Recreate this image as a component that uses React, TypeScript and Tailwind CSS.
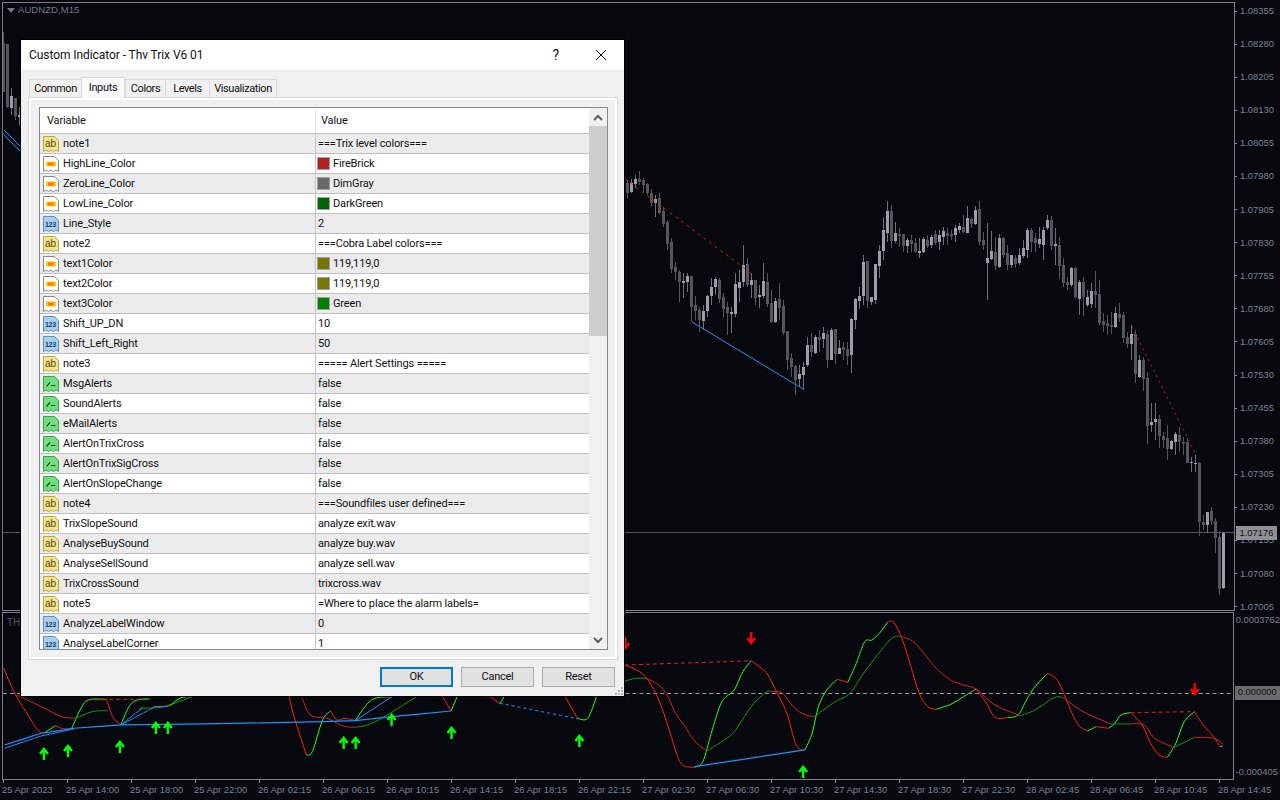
import React from "react";

type C = [number, number, number, number, number, number];
const a4 = `22,30,40,68,85,0;34,28,38,66,70,1;46,15,27,42,55,1;58,3,27,36,45,0;70,25,30,45,70,0;82,38,42,68,75,0;94,57,70,98,112,0;106,75,88,100,140,1;118,70,84,128,132,0;130,110,123,162,172,0;142,150,156,222,240,0;154,205,216,296,310,0;166,275,291,305,330,0;178,300,306,335,395,0;190,310,333,339,385,1;202,310,318,335,365,1;214,318,318,410,455,0;226,378,405,423,450,0;238,410,421,450,485,0;250,405,423,452,480,1;262,375,378,423,440,1;274,323,351,378,405,1;286,322,327,351,375,1;298,325,330,387,400,0;310,370,381,417,445,0;322,395,411,429,495,0;334,410,426,431,490,1;346,310,342,432,440,1;358,300,336,354,395,1;370,225,285,336,350,1;382,265,282,345,352,0;394,310,330,345,385,1;406,330,330,385,405,0;418,345,375,381,415,1;430,280,333,378,385,1;442,310,336,402,410,0;454,360,399,456,460,0;466,385,393,456,460,1;478,338,387,414,450,0;490,390,408,489,495,0;502,483,483,570,600,0;514,550,564,591,620,0;526,585,588,630,675,0;538,585,612,627,650,1;550,575,591,615,660,1;562,500,525,585,592,1;574,490,525,546,560,0;586,495,501,549,552,1;598,480,501,510,545,0;610,470,489,507,535,1;622,480,492,570,595,0;634,475,480,570,570,1;646,477,477,552,582,0;658,510,534,552,552,1;670,515,531,540,570,0;682,515,537,558,585,0;694,445,447,555,610,1;706,385,387,450,477,1;718,350,378,393,417,1;730,255,276,378,405,1;742,272,273,393,415,0;754,380,381,396,405,1;766,282,282,390,402,1;778,225,243,288,325,1;790,140,180,243,270,1;802,93,123,189,215,1;814,105,123,213,235,0;826,155,189,213,220,1;838,175,193,198,230,0;850,192,193,228,245,0;862,205,209,228,250,1;874,195,209,222,245,0;886,205,219,246,250,0;898,205,243,249,265,1;910,200,207,246,250,1;922,195,209,228,235,0;934,195,201,225,235,1;946,180,192,219,225,0;958,180,195,216,240,1;970,170,183,201,225,1;982,175,189,198,225,0`;
const a5 = `4,120,131,137,150,0;16,105,114,135,155,1;28,100,108,120,130,1;40,75,111,126,130,0;52,48,84,129,129,1;64,80,87,102,115,0;76,48,60,102,105,1;88,33,57,156,165,0;100,125,150,165,180,0;112,100,205,219,330,1;124,122,183,207,210,1;136,140,186,228,240,0;148,132,144,231,235,1;160,140,144,195,205,0;172,165,190,225,240,0;184,195,195,225,235,1;196,195,204,222,235,0;208,175,195,219,225,1;220,150,174,198,205,1;232,115,120,180,205,1;244,115,120,156,185,0;256,130,144,159,185,0;268,110,147,162,175,1;280,110,120,165,210,1;292,75,90,114,120,1;304,78,90,168,180,0;316,115,162,168,225,1;328,140,165,228,268,0;340,205,225,279,290,0;352,260,276,285,300,0;364,232,234,285,290,1;376,232,234,321,328,0;388,270,276,327,375,1;400,262,276,321,378,0;412,300,321,345,350,1;424,278,303,342,355,1;436,243,303,315,355,0;448,270,312,399,405,0;460,368,393,405,425,0;472,375,399,408,435,0;484,365,405,411,432,0;496,352,369,411,415,1;508,340,372,384,395,0;520,365,375,444,460,0;532,425,441,462,475,0;544,405,432,462,510,1;556,420,432,552,580,0;568,495,510,561,565,1;580,500,510,567,602,0;592,545,564,708,762,0;604,640,696,705,725,1;616,640,687,696,750,1;628,675,687,738,775,0;640,725,738,750,775,0;652,705,744,777,810,0;664,750,753,777,780,1;676,725,732,756,795,1;688,710,735,756,785,0;700,740,756,762,795,0;712,745,756,819,820,0;724,800,817,819,845,1;736,795,819,821,845,1;748,817,819,996,1038,0;760,975,996,1005,1020,0;772,965,966,1005,1028,1;784,950,963,993,1005,0;796,985,993,1044,1090,0;808,1023,1042,1197,1215,0;820,1025,1028,1194,1197,1`;
const parse = (s: string, ox: number, oy: number) =>
  s.split(";").map((r) => {
    const v = r.split(",").map(Number);
    return [Math.round(ox + v[0] / 3 - 0.3), Math.round(oy + v[1] / 3), Math.round(oy + v[2] / 3), Math.round(oy + v[3] / 3), Math.round(oy + v[4] / 3), v[5]] as C;
  });
const candles: C[] = [
  [3, 32, 43, 92, 92, 0],
  [7, 44, 44, 107, 108, 0],
  [11, 88, 96, 108, 115, 1],
  [15, 98, 98, 116, 120, 0],
  [19, 107, 115, 117, 125, 1],
  ...parse(a4, 620, 170),
  ...parse(a5, 950, 190),
];

type P = [number, number];
const z3 = (s: string): P[] =>
  s.split(" ").map((p) => {
    const [x, y] = p.split(",").map(Number);
    return [621.5 + x / 2.376, 600 + y / 3];
  });
const z2 = (s: string): P[] =>
  s.split(" ").map((p) => {
    const [x, y] = p.split(",").map(Number);
    return [0.5 + x / 2.45, 600 + y / 3];
  });
// Catmull-Rom curve through the points
const curve = (p: P[]) => {
  let d = `M${p[0][0].toFixed(1)} ${p[0][1].toFixed(1)}`;
  for (let i = 0; i < p.length - 1; i++) {
    const a = p[Math.max(0, i - 1)], b = p[i], c = p[i + 1], e = p[Math.min(p.length - 1, i + 2)];
    d += `C${(b[0] + (c[0] - a[0]) / 6).toFixed(1)} ${(b[1] + (c[1] - a[1]) / 6).toFixed(1)} ${(c[0] - (e[0] - b[0]) / 6).toFixed(1)} ${(c[1] - (e[1] - b[1]) / 6).toFixed(1)} ${c[0].toFixed(1)} ${c[1].toFixed(1)}`;
  }
  return d;
};

const R = "#ff1c1c", G = "#1cff1c", R2 = "#d5202c", G2 = "#0f990f", B = "#1e90ff";
const lines: [P[], string, number?, string?][] = [
  [z2("8,205 35,280 70,350 95,395 110,397"), R],
  [z2("110,397 135,377"), G],
  [z2("135,377 155,387 175,385"), R],
  [z2("175,385 195,330 215,300 260,298"), G],
  [z2("260,298 275,350 295,375"), R],
  [z2("295,375 315,320 335,300 365,297"), G],
  [z2("375,320 415,318"), R],
  [z2("40,285 100,320 150,350 185,355"), R2],
  [z2("185,355 225,335 262,332"), G2],
  [z2("340,325 400,320 470,290"), G2],
  [z2("415,318 440,295 470,288"), G],
  [z2("215,300 350,297"), R2, 1, "4 3"],
  [z2("708,290 720,350 750,465"), R],
  [z2("750,465 765,455 790,360 810,333"), G],
  [z2("810,333 825,360 845,355 870,362"), R],
  [z2("740,295 760,345 800,355 840,378 870,382"), R2],
  [z2("870,382 920,365 1020,290"), G2],
  [z2("870,362 910,300 960,290"), G],
  [z2("1085,290 1105,333"), R],
  [z2("1105,333 1120,290"), G],
  [z2("1200,290 1225,310"), R],
  [z2("1225,310 1235,290"), G],
  [z2("1385,290 1415,355"), R],
  [z2("1415,355 1440,355 1462,290"), G],
  [z2("10,435 100,400"), B, 1.2],
  [z2("100,400 180,385"), B, 1.2],
  [z2("180,385 295,375"), B, 1.2],
  [z2("295,375 500,372"), B, 1.2],
  [z2("500,372 790,365"), B, 1.2],
  [z2("790,365 870,362"), B, 1.2],
  [z2("870,362 960,350"), B, 1.2],
  [z2("960,350 1105,333"), B, 1.2],
  [z2("10,445 100,408"), B],
  [z2("100,408 180,387"), B],
  [z2("295,375 380,320"), B],
  [z2("380,320 410,320"), B],
  [z2("295,375 350,322"), B],
  [z2("870,362 960,290"), B],
  [z2("1225,310 1418,357"), B, 1, "3 3"],
  [z3("10,195 55,225 90,300 115,390 135,470 150,498 175,502"), R],
  [z3("175,502 195,485 215,400 235,320 250,290 270,270 290,215 310,182"), G],
  [z3("310,182 335,205 350,225 370,275 395,340 415,430 430,450 438,450"), R],
  [z3("438,450 455,400 470,320 490,270 515,238"), G],
  [z3("515,238 540,247"), R],
  [z3("540,247 560,190 580,125 597,120 615,100 635,65"), G],
  [z3("635,65 650,68 670,120 690,200 710,280 730,320 750,328"), R],
  [z3("750,328 785,313 815,290 845,267"), G],
  [z3("845,267 870,310 890,352 920,353"), R],
  [z3("920,353 945,345 965,300 985,260 1015,220"), G],
  [z3("1015,220 1035,235 1050,270 1075,345 1090,378 1110,393"), R],
  [z3("1110,393 1130,380"), G],
  [z3("1130,380 1160,385"), R],
  [z3("1160,385 1175,370 1190,345 1213,338"), G],
  [z3("1213,338 1240,375 1260,430 1280,465 1300,472"), R],
  [z3("1300,472 1320,430 1340,365 1365,335"), G],
  [z3("1365,335 1385,375 1410,410 1425,440"), R],
  [z3("1425,440 1432,438"), G],
  [z3("10,243 35,235 60,235"), G2],
  [z3("60,235 90,255 110,285 130,340 150,375 180,430 205,452"), R2],
  [z3("205,452 240,425 270,395 310,320 345,277 360,275"), G2],
  [z3("360,275 385,280 410,320 435,343 460,350"), R2],
  [z3("460,350 510,305 545,280 580,215 640,120 665,108"), G2],
  [z3("665,108 700,130 750,205 785,240 815,255 845,267 890,315 950,347"), R2],
  [z3("950,347 985,330 1030,293 1050,292"), G2],
  [z3("1050,292 1100,335 1165,372"), R2],
  [z3("1165,372 1210,372"), G2],
  [z3("1210,372 1245,375 1270,415 1315,443"), R2],
  [z3("1315,443 1365,412"), G2],
  [z3("1365,412 1410,415 1432,432"), R2],
  [z3("10,195 310,182"), R2, 1, "4 3"],
  [z3("1213,338 1365,335"), R2, 1, "4 3"],
  [z3("175,500 438,450"), B, 1.2],
];
const up: P[] = [[44, 754], [68, 751], [120, 747], [156, 728], [168, 728], [344, 743], [356, 743], [392, 720], [452, 733], [580, 741], [804, 772]];
const down: P[] = [[626, 643], [752, 638], [1196, 689]];

const prices = ["1.08355", "1.08280", "1.08205", "1.08130", "1.08055", "1.07980", "1.07905", "1.07830", "1.07755", "1.07680", "1.07605", "1.07530", "1.07455", "1.07380", "1.07305", "1.07230", "1.07155", "1.07080", "1.07005"];
const times = ["25 Apr 2023", "25 Apr 14:00", "25 Apr 18:00", "25 Apr 22:00", "26 Apr 02:15", "26 Apr 06:15", "26 Apr 10:15", "26 Apr 14:15", "26 Apr 18:15", "26 Apr 22:15", "27 Apr 02:30", "27 Apr 06:30", "27 Apr 10:30", "27 Apr 14:30", "27 Apr 18:30", "27 Apr 22:30", "28 Apr 02:45", "28 Apr 06:45", "28 Apr 10:45", "28 Apr 14:45"];

type Kind = "ab" | "color" | "num" | "bool";
const rows: [Kind, string, string, string?][] = [
  ["ab", "note1", "===Trix level colors==="],
  ["color", "HighLine_Color", "FireBrick", "#b22222"],
  ["color", "ZeroLine_Color", "DimGray", "#696969"],
  ["color", "LowLine_Color", "DarkGreen", "#006400"],
  ["num", "Line_Style", "2"],
  ["ab", "note2", "===Cobra Label colors==="],
  ["color", "text1Color", "119,119,0", "#777700"],
  ["color", "text2Color", "119,119,0", "#777700"],
  ["color", "text3Color", "Green", "#008000"],
  ["num", "Shift_UP_DN", "10"],
  ["num", "Shift_Left_Right", "50"],
  ["ab", "note3", "===== Alert Settings ====="],
  ["bool", "MsgAlerts", "false"],
  ["bool", "SoundAlerts", "false"],
  ["bool", "eMailAlerts", "false"],
  ["bool", "AlertOnTrixCross", "false"],
  ["bool", "AlertOnTrixSigCross", "false"],
  ["bool", "AlertOnSlopeChange", "false"],
  ["ab", "note4", "===Soundfiles user defined==="],
  ["ab", "TrixSlopeSound", "analyze exit.wav"],
  ["ab", "AnalyseBuySound", "analyze buy.wav"],
  ["ab", "AnalyseSellSound", "analyze sell.wav"],
  ["ab", "TrixCrossSound", "trixcross.wav"],
  ["ab", "note5", "=Where to place the alarm labels="],
  ["num", "AnalyzeLabelWindow", "0"],
  ["num", "AnalyseLabelCorner", "1"],
];

const shape = "M0.5 0.5H11.5L15.5 4.5V15.5L13 14L10.5 15.5L8 14L5.5 15.5L3 14L0.5 15.5Z";
function Icon({ kind }: { kind: Kind }) {
  const st: Record<Kind, [string, string]> = {
    ab: ["#f4e58c", "#b9a445"],
    color: ["#ffffff", "#8a8a8a"],
    num: ["#a9cfef", "#5b8fc0"],
    bool: ["#72dd7e", "#3ea34a"],
  };
  return (
    <svg width="16" height="16" viewBox="0 0 16 16" className="shrink-0">
      <path d={shape} fill={st[kind][0]} stroke={st[kind][1]} />
      {kind === "ab" && <text x="7.5" y="11" textAnchor="middle" fontSize="10" fontFamily="Liberation Sans" fill="#4d4310">ab</text>}
      {kind === "num" && <text x="7.5" y="10.5" textAnchor="middle" fontSize="7" fontWeight="700" fontFamily="Liberation Sans" fill="#123f73">123</text>}
      {kind === "color" && (
        <g>
          <rect x="3" y="5.5" width="10" height="5" fill="#ffcc00" />
          <rect x="5" y="6.5" width="6" height="3" fill="#ff7400" />
        </g>
      )}
      {kind === "bool" && <path d="M3.5 10.5L7 6.5M8 9.5H12.5" fill="none" stroke="#14551d" strokeWidth="1.2" />}
    </svg>
  );
}

function Chevron({ dir }: { dir: "up" | "down" }) {
  return (
    <svg width="10" height="7" viewBox="0 0 10 7">
      <path d={dir === "up" ? "M1 6L5 2L9 6" : "M1 1L5 5L9 1"} fill="none" stroke="#606060" strokeWidth="2" />
    </svg>
  );
}

function Tab({ label, w, active }: { label: string; w: string; active?: boolean }) {
  return (
    <div className={active
      ? `${w} h-[21px] -mb-px z-10 flex items-center justify-center border border-b-0 border-[#d9d9d9] bg-[#f9f9f9] tracking-[-0.35px]`
      : `${w} h-[18px] flex items-center justify-center border border-b-0 border-l-[#d9d9d9] border-r-0 border-t-[#d9d9d9] bg-[#f0f0f0] pt-px tracking-[-0.4px]`}>
      {label}
    </div>
  );
}

function Btn({ label, primary }: { label: string; primary?: boolean }) {
  return (
    <div className={primary
      ? "w-[73px] h-[20px] flex items-center justify-center bg-[#e1e1e1] border-2 border-[#0078d7]"
      : "w-[73px] h-[20px] flex items-center justify-center bg-[#e1e1e1] border border-[#adadad]"}>
      {label}
    </div>
  );
}

export default function App() {
  return (
    <div className="relative w-[1280px] h-[800px] overflow-hidden bg-[#08090e] pl-[2px] pt-[2px] font-['Liberation_Sans',sans-serif] text-[9.4px] text-[#77818f]">
      {/* main chart */}
      <div className="flex h-[609px]">
        <div className="relative w-[1233px] border border-[#7d7d85]">
          <svg className="block w-full h-full" viewBox="3 3 1231 607">
            <line x1="3" x2="1234" y1="532.5" y2="532.5" stroke="#55555f" />
            <g shapeRendering="crispEdges">
              {candles.map((c, i) => (
                <g key={i}>
                  <rect x={c[0]} y={c[1]} width="1" height={Math.max(1, c[4] - c[1])} fill={c[5] ? "#6f6f78" : "#55555a"} />
                  <rect x={c[0] - 1} y={c[2]} width="3" height={Math.max(1, c[3] - c[2])} fill={c[5] ? "#9d9daa" : "#55555a"} />
                </g>
              ))}
            </g>
            <path d="M4 130L21 147M4 135L21 152" stroke={B} fill="none" />
            <polyline points="625,179 752,274" stroke="#c8202a" strokeWidth="0.9" strokeDasharray="3 4" fill="none" />
            <polyline points="1132,327 1196,455" stroke="#c8202a" strokeWidth="0.9" strokeDasharray="2 4" fill="none" />
            <polyline points="692,322 803,389" stroke={B} fill="none" />
          </svg>
          <div className="absolute left-[4px] top-[1px] flex h-[13px] items-center gap-[3px] text-[9.6px] text-[#6d7785]">
            <svg width="8" height="5" viewBox="0 0 8 5"><path d="M0 0H8L4 5Z" fill="#6d7785" /></svg>
            <span>AUDNZD,M15</span>
          </div>
        </div>
        <div className="flex -ml-[1px] flex-col gap-[19.1px] pt-[2px]">
          {prices.map((p) => (
            <div key={p} className="flex h-[14px] shrink-0 items-center gap-[3px]">
              <span className="h-px w-[3px] bg-[#8a8a90]" />
              <span>{p}</span>
            </div>
          ))}
        </div>
      </div>

      {/* price badge */}
      <div className="absolute left-[1236px] top-[526px] flex h-[14px] w-[41px] items-center justify-center bg-[#8f8f96] text-[#111111]">1.07176</div>

      {/* indicator */}
      <div className="mt-px flex h-[168px]">
        <div className="relative w-[1233px] border border-[#7d7d85]">
          <svg className="block w-full h-full" viewBox="3 613 1231 166">
            <line x1="3" x2="1234" y1="693.5" y2="693.5" stroke="#9a9a9a" strokeDasharray="4 3" />
            {lines.map((l, i) => (
              <path key={i} d={curve(l[0])} fill="none" stroke={l[1]} strokeWidth={l[2] ?? 1} strokeDasharray={l[3]} />
            ))}
            {up.map(([x, y], i) => (
              <path key={i} d={`M${x} ${y + 6}V${y - 4}M${x - 4} ${y}L${x} ${y - 5}L${x + 4} ${y}`} fill="none" stroke="#00ff00" strokeWidth="2.4" />
            ))}
            {down.map(([x, y], i) => (
              <path key={i} d={`M${x} ${y - 6}V${y + 4}M${x - 4} ${y}L${x} ${y + 5}L${x + 4} ${y}`} fill="none" stroke="#ff0000" strokeWidth="2.4" />
            ))}
          </svg>
          <div className="absolute left-[4px] top-[2px] text-[10px] text-[#55555c]">TH</div>
        </div>
        <div className="flex flex-col whitespace-nowrap">
          <div className="mt-[1.5px] flex h-[14px] items-center pl-[2px]">0.0003762</div>
          <div className="ml-px mt-[58px] flex h-[14px] w-[45px] items-center overflow-hidden bg-[#6b6b70] pl-[3px] text-[#111111]">0.000000</div>
          <div className="mt-[65.5px] flex h-[14px] items-center pl-[2px]">-0.000405</div>
        </div>
      </div>

      {/* time axis */}
      <div className="ml-px flex">
        {times.map((t) => (
          <div key={t} className="w-16 shrink-0 whitespace-nowrap">
            <div className="h-[3px] w-px bg-[#8a8a90]" />
            <div className="-ml-px leading-[11px] mt-[1px]">{t}</div>
          </div>
        ))}
      </div>

      {/* dialog */}
      <div className="absolute left-[21px] top-[40px] flex h-[656px] w-[603px] flex-col bg-[#f0f0f0] font-['Roboto',sans-serif] text-[11px] tracking-[-0.15px] text-[#111111] shadow-[0_0_0_1px_#000000]">
        <div className="flex h-[30px] shrink-0 items-center justify-between bg-white pl-[8px] pr-[17px] text-[12px] tracking-[-0.07px]">
          <span>Custom Indicator - Thv Trix V6 01</span>
          <div className="flex items-center gap-[36px]">
            <span className="text-[14px]">?</span>
            <svg width="12" height="12" viewBox="0 0 12 12"><path d="M1 1L11 11M11 1L1 11" stroke="#111111" /></svg>
          </div>
        </div>
        <div className="flex h-[27px] shrink-0 items-end pl-[8px] pt-[7px]">
          <Tab label="Common" w="w-[52px]" />
          <Tab label="Inputs" w="w-[44px]" active />
          <Tab label="Colors" w="w-[40px]" />
          <Tab label="Levels" w="w-[44px]" />
          <div className="border-r border-[#d9d9d9]"><Tab label="Visualization" w="w-[67px]" /></div>
        </div>
        <div className="ml-[7px] h-[563px] w-[590px] shrink-0 border border-[#d9d9d9] pl-[10px] pt-[9px] shadow-[inset_0_0_0_2px_#ffffff]">
          <div className="flex h-[543px] w-[569px] overflow-hidden border border-[#828790] bg-white">
            <div className="w-[549px] shrink-0">
              <div className="grid h-[26px] grid-cols-[275px_1fr] items-center border-b border-[#c0c0c0] pt-[2px]">
                <div className="pl-[7px]">Variable</div>
                <div className="flex h-full items-center border-l border-[#e4e4e4] pl-[5px]">Value</div>
              </div>
              {rows.map(([k, n, v, c], i) => (
                <div key={n} className={i % 2 === 0
                  ? "grid h-[20px] grid-cols-[275px_1fr] items-center border-b border-[#c0c0c0] bg-[#ebebeb]"
                  : "grid h-[20px] grid-cols-[275px_1fr] items-center border-b border-[#c0c0c0] bg-white"}>
                  <div className="flex items-center gap-[4px] pl-[3px]">
                    <Icon kind={k} />
                    <span className="pt-[2px]">{n}</span>
                  </div>
                  <div className={c
                    ? "flex h-full items-center gap-[3px] border-l border-[#c8c8c8] pl-[1px]"
                    : "flex h-full items-center gap-[3px] border-l border-[#c8c8c8] pl-[2px]"}>
                    {c && <span className="h-[13px] w-[13px] border border-[#a0a0a0]" style={{ backgroundColor: c }} />}
                    <span className="pt-[2px]">{v}</span>
                  </div>
                </div>
              ))}
            </div>
            <div className="flex w-[18px] shrink-0 flex-col bg-[#f0f0f0]">
              <div className="flex h-[18px] shrink-0 items-center justify-center"><Chevron dir="up" /></div>
              <div className="h-[210px] shrink-0 bg-[#cdcdcd]" />
              <div className="flex-1" />
              <div className="flex h-[18px] shrink-0 items-center justify-center"><Chevron dir="down" /></div>
            </div>
          </div>
        </div>
        <div className="relative flex flex-1 justify-end gap-[8px] pr-[9px] pt-[7px] tracking-[-0.25px]">
          <Btn label="OK" primary />
          <Btn label="Cancel" />
          <Btn label="Reset" />
          <svg className="absolute bottom-0 right-0" width="10" height="10" viewBox="0 0 10 10">
            <path d="M7 1h2v2H7zM4 4h2v2H4zM7 4h2v2H7zM1 7h2v2H1zM4 7h2v2H4zM7 7h2v2H7z" fill="#b8b8b8" />
          </svg>
        </div>
      </div>
    </div>
  );
}
